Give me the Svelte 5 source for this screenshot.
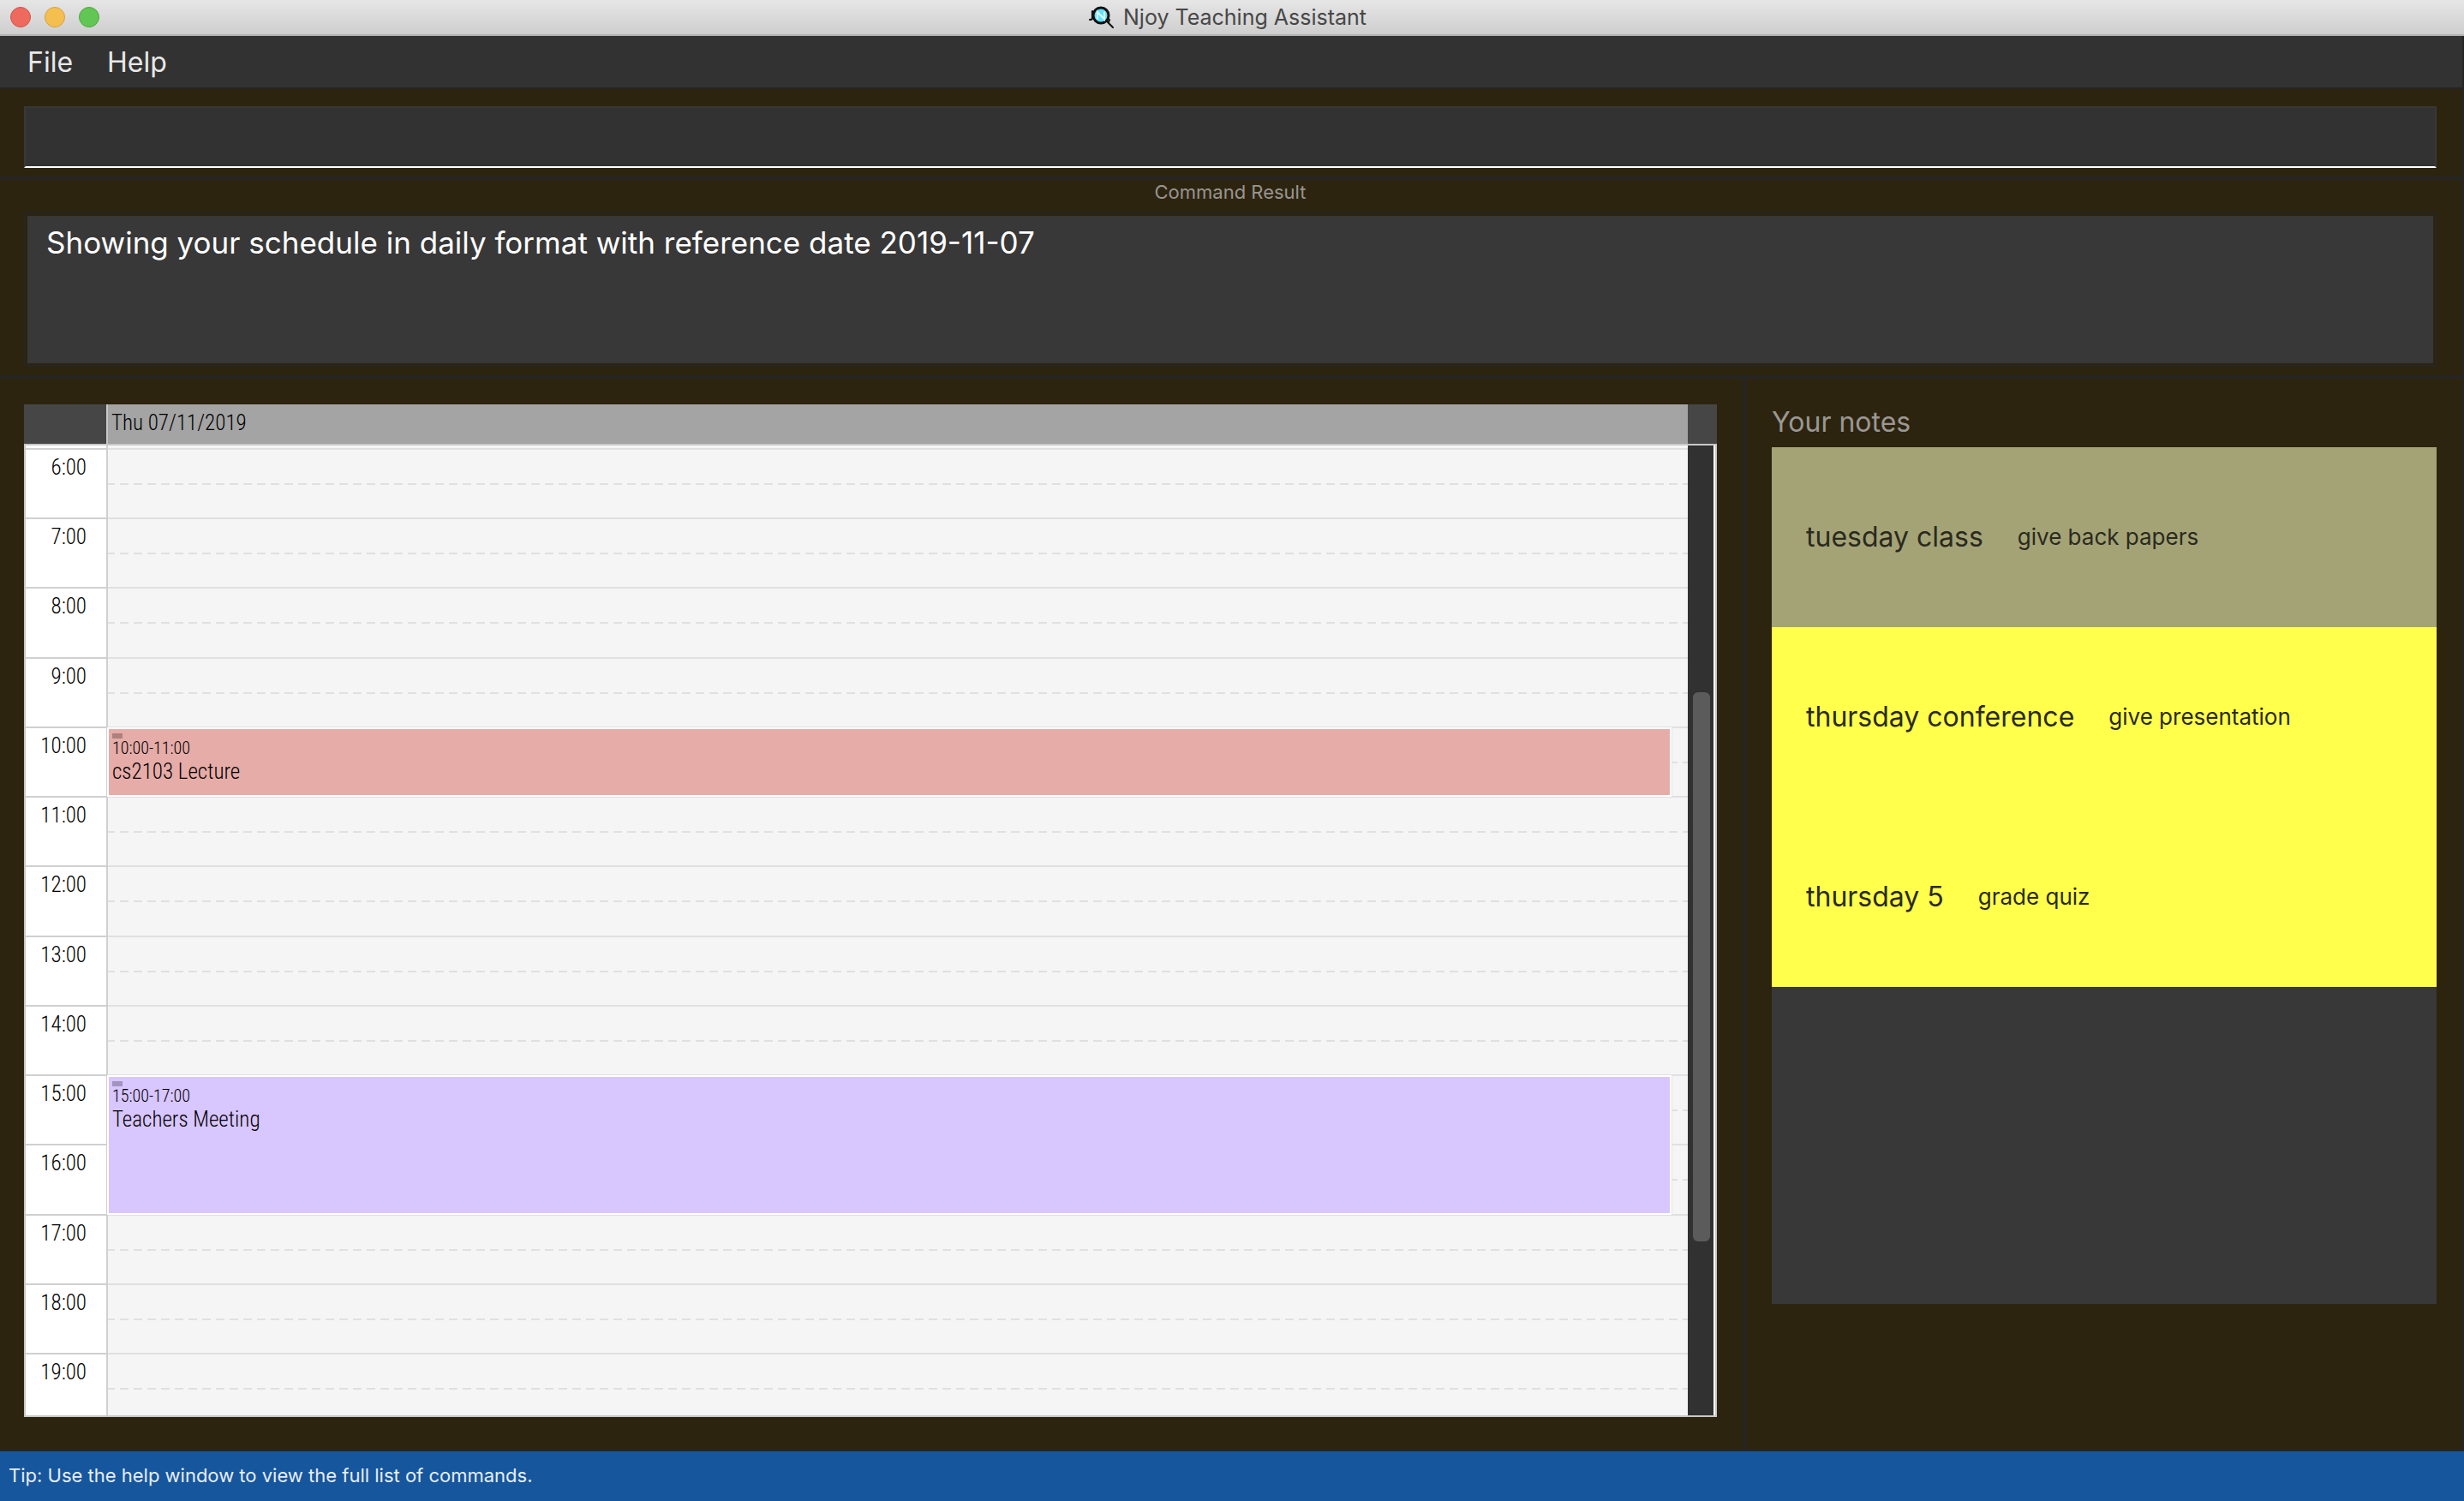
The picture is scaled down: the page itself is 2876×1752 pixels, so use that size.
<script>
  const menus = ['File', 'Help'];
  const hours = Array.from({ length: 14 }, (_, i) => i + 6);
  const events = [
    { time: '10:00-11:00', title: 'cs2103 Lecture', start: 10, end: 11, tone: 'rose' },
    { time: '15:00-17:00', title: 'Teachers Meeting', start: 15, end: 17, tone: 'violet' }
  ];
  const notes = [
    { title: 'tuesday class', text: 'give back papers', muted: true },
    { title: 'thursday conference', text: 'give presentation', muted: false },
    { title: 'thursday 5', text: 'grade quiz', muted: false }
  ];
  // Row 1 of the grid is the sliver of 5:00 still in view, so 6:00 sits on row 2.
  const rowOf = (hour) => hour - 4;
  let command = $state('');
  let result = $state('Showing your schedule in daily format with reference date 2019-11-07');
</script>

<div class="app">
  <header class="titlebar">
    <div class="lights">
      <button class="light close" aria-label="Close"></button>
      <button class="light minimise" aria-label="Minimise"></button>
      <button class="light zoom" aria-label="Zoom"></button>
    </div>
    <h1>
      <svg viewBox="0 0 32 28" width="32" height="28" aria-hidden="true">
        <circle cx="16" cy="12" r="9" fill="#62e0fa" stroke="#111" stroke-width="3" />
        <path d="M12 16.500V8l8 8.500V7.500" fill="none" stroke="#d9f6fb" stroke-width="2.200" />
        <path d="M22 18l3 2 1-3M24 20l6 6" fill="none" stroke="#111" stroke-width="2" stroke-linecap="round" />
        <path d="M6 7v8q0 2-3 2" fill="none" stroke="#111" stroke-width="2.200" stroke-linecap="round" />
      </svg>
      Njoy Teaching Assistant
    </h1>
  </header>

  <div class="window">
    <nav class="menubar">
      {#each menus as menu}<button>{menu}</button>{/each}
    </nav>

    <section class="command">
      <input type="text" aria-label="Command" bind:value={command} />
    </section>

    <section class="result">
      <label for="result">Command Result</label>
      <div class="frame">
        <textarea id="result" readonly bind:value={result}></textarea>
      </div>
    </section>

    <main>
      <section class="schedule">
        <div class="dayhead">
          <span class="day">Thu 07/11/2019</span>
        </div>
        <div class="body">
          <div class="grid">
            <div class="hour first"></div>
            <div class="slot first"></div>
            {#each hours as hour}
              <div class="hour" style:grid-row={rowOf(hour)}>{hour}:00</div>
              <div class="slot" style:grid-row={rowOf(hour)}><div class="half"></div></div>
            {/each}
            {#each events as event}
              <article class="event {event.tone}" style:grid-row="{rowOf(event.start)} / {rowOf(event.end)}">
                <span class="mark"></span>
                <span class="time">{event.time}</span>
                <span class="name">{event.title}</span>
              </article>
            {/each}
          </div>
          <div class="scrollbar">
            <div class="thumb"></div>
          </div>
        </div>
      </section>

      <aside class="notes">
        <h2>Your notes</h2>
        <ul>
          {#each notes as note}
            <li class:muted={note.muted}>
              <span class="subject">{note.title}</span>
              <span class="detail">{note.text}</span>
            </li>
          {/each}
        </ul>
      </aside>
    </main>
  </div>

  <footer>Tip: Use the help window to view the full list of commands.</footer>
</div>

<style>
  :global(body) {
    margin: 0;
    background: #2d240f;
    font-family: Inter, "Liberation Sans", sans-serif;
  }
  .app, .app * {
    box-sizing: border-box;
  }
  .app {
    display: flex;
    flex-direction: column;
    min-height: 100vh;
  }
  button, input, textarea {
    font-family: inherit;
    margin: 0;
    border-radius: 0;
    outline: none;
  }
  .titlebar {
    display: grid;
    grid-template-columns: 1fr auto 1fr;
    align-items: center;
    height: 42px;
    padding: 0 24px 0 12px;
    background: linear-gradient(#e6e6e6, #cecece);
    border-bottom: 2px solid #b2b2b2;
  }
  .lights {
    display: flex;
    gap: 16px;
  }
  .light {
    width: 24px;
    height: 24px;
    padding: 0;
    border: 1px solid;
    border-radius: 50%;
  }
  .close { background: #ee6a5f; border-color: #d3524a; }
  .minimise { background: #f5bf4f; border-color: #d8a040; }
  .zoom { background: #62c655; border-color: #4fa73e; }
  h1 {
    display: flex;
    align-items: center;
    gap: 10px;
    margin: 0;
    font-size: 25px;
    line-height: 30px;
    font-weight: 400;
    color: #474747;
  }
  .window {
    flex: 1;
    display: flex;
    flex-direction: column;
    background: #2d240f;
    border-right: 2px solid #252525;
    border-bottom: 2px solid #252525;
  }
  .menubar {
    display: flex;
    gap: 40px;
    height: 62px;
    padding: 2px 32px 0;
    background: #323232;
    border-bottom: 2px solid #252525;
  }
  .menubar button {
    padding: 0;
    border: 0;
    background: none;
    color: #e8e8e8;
    font-size: 32px;
    line-height: 58px;
  }
  .command {
    padding: 20px 30px 10px 28px;
    border-bottom: 4px solid #252525;
  }
  .command input {
    display: block;
    width: 100%;
    height: 72px;
    padding: 0 20px;
    border: 2px solid #383838;
    border-bottom-color: #fff;
    background: #323232;
    color: #fff;
    font-size: 35px;
  }
  .result {
    padding: 0 30px 10px 28px;
    border-bottom: 4px solid #252525;
  }
  .result label {
    display: block;
    text-align: center;
    color: #989591;
    font-size: 22px;
    line-height: 28px;
    padding-bottom: 10px;
  }
  .frame {
    padding: 2px;
    border: 2px solid #252525;
  }
  textarea {
    display: block;
    width: 100%;
    height: 172px;
    padding: 10px 22px;
    border: 0;
    resize: none;
    background: #383838;
    color: #fff;
    font-size: 35px;
    line-height: 42px;
  }
  main {
    flex: 1;
    display: grid;
    grid-template-columns: minmax(0, 2034fr) minmax(0, 840fr);
  }
  .schedule {
    display: flex;
    flex-direction: column;
    padding: 30px 30px 38px 28px;
    font-family: "Roboto Condensed", Roboto, sans-serif;
    font-size: 25px;
    font-weight: 300;
    line-height: 30px;
    color: #000;
  }
  .dayhead {
    display: flex;
    height: 48px;
    padding: 0 34px 0 96px;
    background: #464646;
    border-bottom: 2px solid #c8c8c8;
  }
  .day {
    flex: 1;
    padding-left: 4px;
    line-height: 44px;
    background: #a4a4a4;
    border-left: 2px solid #c8c8c8;
  }
  .body {
    flex: 1;
    display: flex;
    padding-right: 2px;
    background: #fff;
    border: solid #c8c8c8;
    border-width: 0 2px 2px;
  }
  .grid {
    flex: 1;
    display: grid;
    grid-template-columns: 96px minmax(0, 1fr);
    grid-template-rows: 3px repeat(13, minmax(0, 1fr)) 73px;
    background: #f5f5f5;
  }
  .hour {
    grid-column: 1;
    padding: 6px 23px 0 0;
    text-align: right;
    background: #fff;
    border-top: 2px solid #d0d0d0;
    border-right: 2px solid #d0d0d0;
  }
  .slot {
    grid-column: 2;
    border-top: 2px solid #e0e0e0;
  }
  .first {
    grid-row: 1;
    padding: 0;
    border-top: 0;
  }
  .half {
    height: 2px;
    margin-top: 39px;
    background: repeating-linear-gradient(90deg, #e0e0e0 0 8px, transparent 8px 14px, #e0e0e0 14px 16px);
  }
  .event {
    grid-column: 2;
    display: flex;
    flex-direction: column;
    margin: 1px 19px -1px -1px;
    padding: 5px 4px;
    border: 2px solid #fff;
    box-shadow: 1px 0 0 #e6e6e6;
    z-index: 1;
  }
  .rose { background: #e6aca8; }
  .violet { background: #d8c6fe; }
  .mark {
    width: 12px;
    height: 6px;
    background: rgba(0, 0, 0, 0.25);
  }
  .time {
    font-size: 20px;
    line-height: 22px;
  }
  .name {
    line-height: 34px;
  }
  .scrollbar {
    display: flex;
    flex-direction: column;
    width: 30px;
    padding: 0 4px 0 6px;
    background: #313131;
  }
  .scrollbar::before {
    content: "";
    flex: 288;
  }
  .scrollbar::after {
    content: "";
    flex: 203;
  }
  .thumb {
    flex: 641;
    background: #5b5b5b;
    border-radius: 6px;
  }
  .notes {
    display: flex;
    flex-direction: column;
    padding: 30px 30px 170px;
    border-left: 4px solid #252525;
  }
  h2 {
    margin: 0;
    padding-bottom: 8px;
    color: #9a9894;
    font-size: 32px;
    line-height: 42px;
    font-weight: 400;
  }
  ul {
    flex: 1;
    margin: 0;
    padding: 0;
    list-style: none;
    background: #383838;
  }
  li {
    display: flex;
    align-items: center;
    gap: 40px;
    height: 210px;
    padding: 0 40px;
    background: #ffff4c;
    color: #2a2a1e;
  }
  .muted { background: #a4a376; }
  .subject {
    font-size: 32px;
    line-height: 40px;
  }
  .detail {
    font-size: 26px;
    line-height: 40px;
  }
  footer {
    height: 58px;
    padding: 0 10px;
    background: #16569d;
    color: #e6edf5;
    font-size: 22px;
    line-height: 56px;
  }
</style>
